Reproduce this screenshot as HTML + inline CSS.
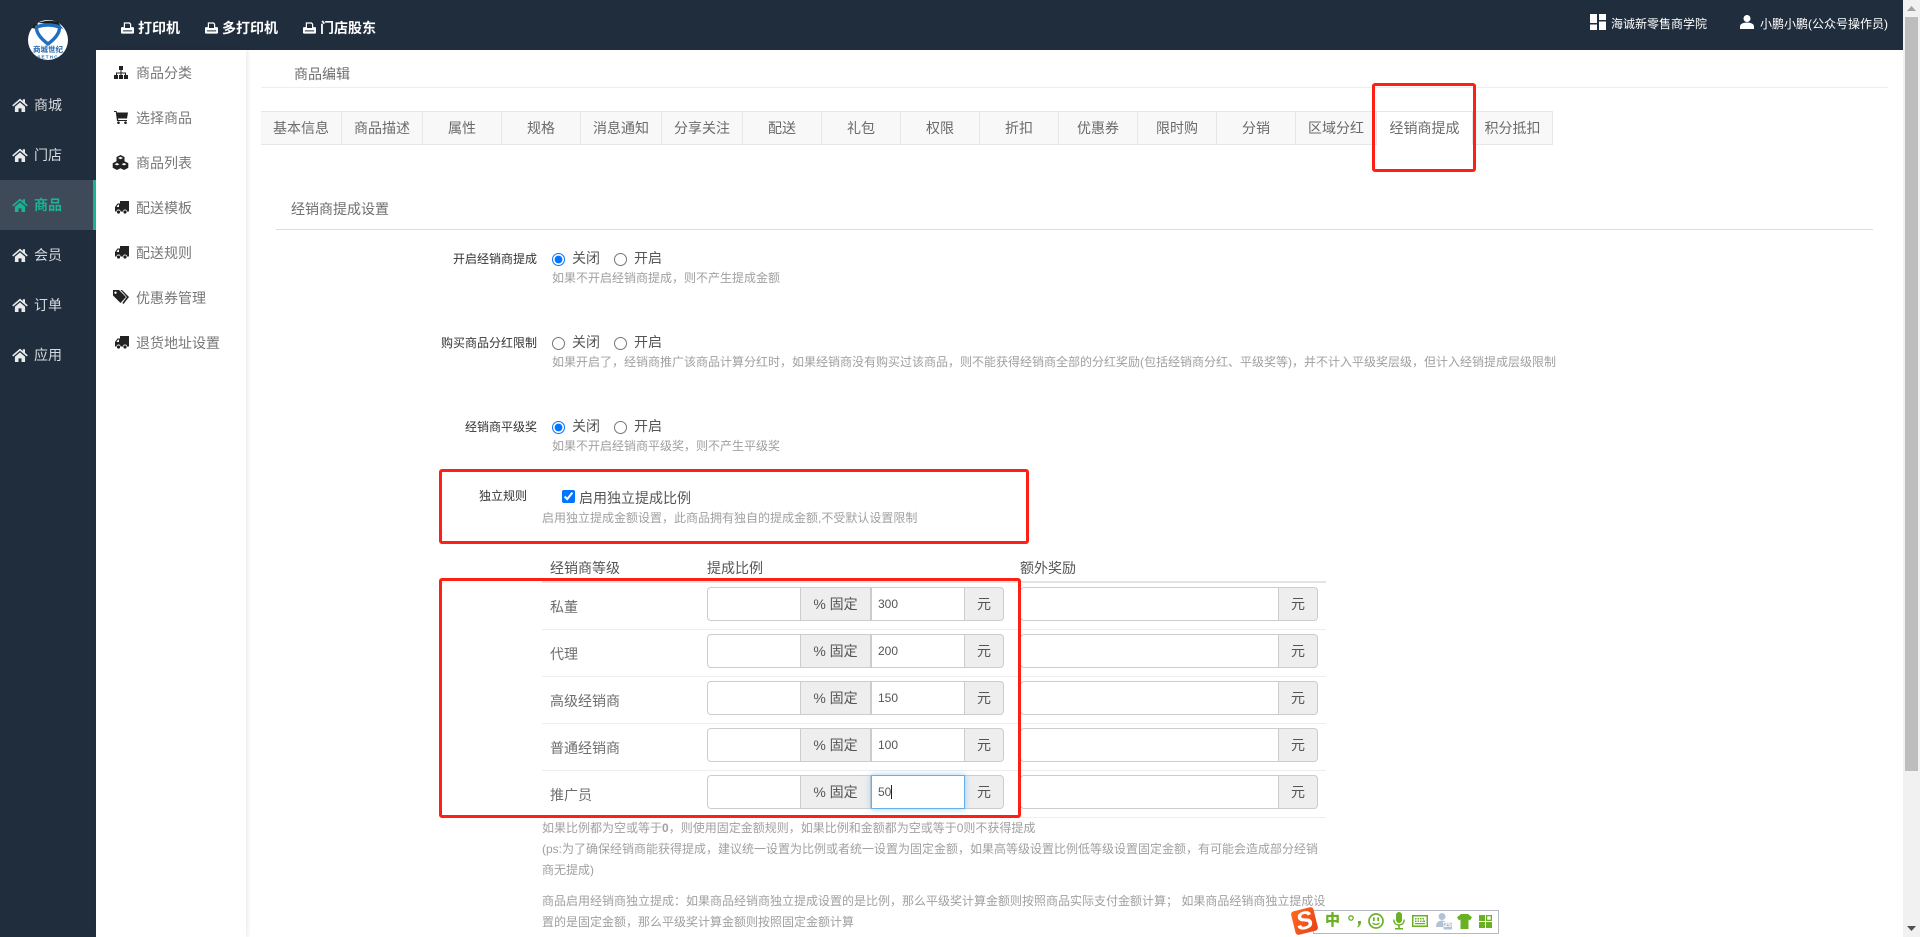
<!DOCTYPE html>
<html lang="zh-CN">
<head>
<meta charset="utf-8">
<title>商品编辑</title>
<style>
html,body{margin:0;padding:0;width:1920px;height:937px;overflow:hidden;background:#fff;}
body{position:relative;font-family:"Liberation Sans","Noto Sans CJK SC",sans-serif;font-size:14px;color:#666;}
.a{position:absolute;white-space:nowrap;}
.t{position:absolute;white-space:nowrap;line-height:20px;height:20px;}
svg{position:absolute;display:block;}
.nav{color:#d6dade;left:34px;font-size:14px;}
.sub{left:136px;color:#777;}
.tab{position:absolute;top:111px;height:32px;line-height:33px;text-align:center;background:#f8f8f8;border:1px solid #e7e7e7;border-left:0;box-sizing:content-box;color:#6a6a6a;}
.lab{position:absolute;right:1383px;font-size:12px;color:#333;line-height:20px;white-space:nowrap;}
.help{position:absolute;left:552px;font-size:12px;color:#a0a0a0;line-height:20px;white-space:nowrap;}
.help2{position:absolute;left:542px;font-size:12px;color:#a0a0a0;line-height:20px;white-space:nowrap;}
input[type=radio],input[type=checkbox]{position:absolute;margin:0;width:13px;height:13px;}
.rb{position:absolute;border:3px solid #ff2015;border-radius:3px;box-sizing:border-box;}
.inp{position:absolute;box-sizing:border-box;height:34px;border:1px solid #ccc;background:#fff;font-size:12px;color:#555;line-height:32px;padding-left:6px;}
.add{position:absolute;box-sizing:border-box;height:34px;border:1px solid #ccc;border-left:0;background:#eee;color:#555;text-align:center;line-height:33px;font-size:14px;}
.ln{position:absolute;left:542px;width:784px;height:1px;background:#eee;}
.lvl{position:absolute;left:550px;color:#6e6e6e;line-height:20px;}
.sg{position:absolute;fill:#6ab023;}
</style>
</head>
<body>
<!-- left sidebar -->
<div class="a" style="left:0;top:0;width:96px;height:937px;background:#202d3d;"></div>
<div class="a" style="left:96px;top:0;width:1807px;height:50px;background:#202d3d;"></div>
<div class="a" style="left:0;top:180px;width:93px;height:50px;background:#3e4a58;"></div>
<div class="a" style="left:93px;top:180px;width:3px;height:50px;background:#1ab394;"></div>

<!-- logo -->
<svg style="left:28px;top:20px;" width="40" height="40" viewBox="0 0 40 40">
<circle cx="20" cy="20" r="20" fill="#fff"/>
<path d="M10 3 Q20 -1 30 2 L37 12 Q35 8 29 6 Q20 3 10 3z" fill="#1c1c1c"/>
<path d="M4 8 Q6 4 10 3 L8 9z" fill="#1c1c1c"/>
<path d="M8.500 7 Q20 3 31.500 7 Q32 15 20 24 Q8 15 8.500 7z" fill="none" stroke="#1e6fc0" stroke-width="3.400" stroke-linejoin="round"/>
<text x="20" y="32" text-anchor="middle" font-size="7.500" font-weight="bold" fill="#2466ad" font-family="'Noto Sans CJK SC',sans-serif">商城世纪</text>
<text x="20" y="38.500" text-anchor="middle" font-size="4.500" font-weight="bold" fill="#2466ad" letter-spacing="1.200" font-family="'Liberation Sans',sans-serif">SETHC</text>
</svg>

<!-- main nav -->
<svg style="left:12px;top:98px;" width="16" height="14" viewBox="0 0 16 14"><path fill="#e8eaec" d="M8 .6.2 7.3l1 1.2L8 2.8l6.8 5.7 1-1.2L13 4.9V1.2h-2.200v1.800zM2.900 8.800V14h3.600v-3.600h3V14h3.600V8.800L8 4.400z"/></svg>
<div class="t nav" style="top:95px;">商城</div>
<svg style="left:12px;top:148px;" width="16" height="14" viewBox="0 0 16 14"><path fill="#e8eaec" d="M8 .6.2 7.3l1 1.2L8 2.8l6.8 5.7 1-1.2L13 4.9V1.2h-2.200v1.800zM2.900 8.800V14h3.600v-3.600h3V14h3.600V8.800L8 4.400z"/></svg>
<div class="t nav" style="top:145px;">门店</div>
<svg style="left:12px;top:198px;" width="16" height="14" viewBox="0 0 16 14"><path fill="#1ab394" d="M8 .6.2 7.3l1 1.2L8 2.8l6.8 5.7 1-1.2L13 4.9V1.2h-2.200v1.800zM2.900 8.800V14h3.600v-3.600h3V14h3.600V8.800L8 4.400z"/></svg>
<div class="t nav" style="top:195px;color:#1ab394;font-weight:700;">商品</div>
<svg style="left:12px;top:248px;" width="16" height="14" viewBox="0 0 16 14"><path fill="#e8eaec" d="M8 .6.2 7.3l1 1.2L8 2.8l6.8 5.7 1-1.2L13 4.9V1.2h-2.200v1.800zM2.900 8.800V14h3.600v-3.600h3V14h3.600V8.800L8 4.400z"/></svg>
<div class="t nav" style="top:245px;">会员</div>
<svg style="left:12px;top:298px;" width="16" height="14" viewBox="0 0 16 14"><path fill="#e8eaec" d="M8 .6.2 7.3l1 1.2L8 2.8l6.8 5.7 1-1.2L13 4.9V1.2h-2.200v1.800zM2.900 8.800V14h3.600v-3.600h3V14h3.600V8.800L8 4.400z"/></svg>
<div class="t nav" style="top:295px;">订单</div>
<svg style="left:12px;top:348px;" width="16" height="14" viewBox="0 0 16 14"><path fill="#e8eaec" d="M8 .6.2 7.3l1 1.2L8 2.8l6.8 5.7 1-1.2L13 4.9V1.2h-2.200v1.800zM2.900 8.800V14h3.600v-3.600h3V14h3.600V8.800L8 4.400z"/></svg>
<div class="t nav" style="top:345px;">应用</div>

<!-- top bar -->
<svg style="left:121px;top:22px;" width="13" height="12" viewBox="0 0 14 12"><path fill="#fff" fill-rule="evenodd" d="M3 0h6.500L11 1.500V5h2c.6 0 1 .4 1 1v5c0 .6-.4 1-1 1H1c-.6 0-1-.4-1-1V6c0-.6.4-1 1-1h2zm1.300 1.300V6h5.400V2.200L8.800 1.300zM2 8.600v1.100h10V8.600z"/></svg>
<div class="t" style="left:138px;top:18px;color:#fff;font-weight:700;">打印机</div>
<svg style="left:205px;top:22px;" width="13" height="12" viewBox="0 0 14 12"><path fill="#fff" fill-rule="evenodd" d="M3 0h6.500L11 1.500V5h2c.6 0 1 .4 1 1v5c0 .6-.4 1-1 1H1c-.6 0-1-.4-1-1V6c0-.6.4-1 1-1h2zm1.300 1.300V6h5.400V2.200L8.800 1.300zM2 8.600v1.100h10V8.600z"/></svg>
<div class="t" style="left:222px;top:18px;color:#fff;font-weight:700;">多打印机</div>
<svg style="left:303px;top:22px;" width="13" height="12" viewBox="0 0 14 12"><path fill="#fff" fill-rule="evenodd" d="M3 0h6.500L11 1.500V5h2c.6 0 1 .4 1 1v5c0 .6-.4 1-1 1H1c-.6 0-1-.4-1-1V6c0-.6.4-1 1-1h2zm1.300 1.300V6h5.400V2.200L8.800 1.300zM2 8.600v1.100h10V8.600z"/></svg>
<div class="t" style="left:320px;top:18px;color:#fff;font-weight:700;">门店股东</div>

<svg style="left:1590px;top:14px;" width="16" height="16" viewBox="0 0 16 16"><path fill="#fff" d="M0 0h7v9H0zM9 0h7v6H9zM0 10.500h7V16H0zM9 7.500h7V16H9z"/></svg>
<div class="t" style="left:1611px;top:14px;font-size:12px;color:#fff;">海诚新零售商学院</div>
<svg style="left:1740px;top:15px;" width="14" height="14" viewBox="0 0 14 14"><circle cx="7" cy="3.500" r="3.500" fill="#fff"/><path fill="#fff" d="M0 14v-2.500C0 9 3 7.500 7 7.500s7 1.500 7 4V14z"/></svg>
<div class="t" style="left:1760px;top:14px;font-size:12px;color:#fff;">小鹏小鹏(公众号操作员)</div>

<!-- sub sidebar -->
<div class="a" style="left:96px;top:50px;width:150px;height:887px;background:#fff;box-shadow:2px 0 4px rgba(0,0,0,.08);"></div>
<svg style="left:114px;top:66px;" width="14" height="13" viewBox="0 0 14 13"><path fill="#222" d="M5 0h4v4H7.500v2.500H12V9h2v4h-4V9h1V7.500H7.500V9H9v4H5V9h1.500V7.500H3V9h1v4H0V9h2V6.500h4.500V4H5z"/></svg>
<div class="t sub" style="top:63px;">商品分类</div>
<svg style="left:114px;top:111px;" width="14" height="13" viewBox="0 0 14 13"><path fill="#222" d="M0 0h2.500l.5 1.500h11L13 7.500H4l.3 1.500H13v1H3L1.800 1H0z"/><circle cx="4.500" cy="11.700" r="1.300" fill="#222"/><circle cx="11.500" cy="11.700" r="1.300" fill="#222"/></svg>
<div class="t sub" style="top:108px;">选择商品</div>
<svg style="left:112px;top:155px;" width="17" height="15" viewBox="0 0 17 15"><path fill="#222" fill-rule="evenodd" d="M8.500 0 12.500 2v4.300l3.800 1.900v4.600L12 15l-3.500-1.800L5 15 .7 12.800V8.200l3.800-1.900V2zM6 3l2.500 1.200L11 3 8.500 1.700zM2.500 9.200 5 10.400l2.400-1.200L5 8zM9.600 9.200l2.400 1.200 2.500-1.200L12 8z"/></svg>
<div class="t sub" style="top:153px;">商品列表</div>
<svg style="left:115px;top:201px;" width="14" height="13" viewBox="0 0 14 13"><path fill="#222" fill-rule="evenodd" d="M14 0v10.500h-2a2 2 0 0 0-4 0H5.500a2 2 0 0 0-4 0H0V6l2.500-3.500H5V0zM1.500 6H4V3.600H3z"/><circle cx="3.500" cy="11" r="1.600" fill="#222"/><circle cx="10" cy="11" r="1.600" fill="#222"/></svg>
<div class="t sub" style="top:198px;">配送模板</div>
<svg style="left:115px;top:246px;" width="14" height="13" viewBox="0 0 14 13"><path fill="#222" fill-rule="evenodd" d="M14 0v10.500h-2a2 2 0 0 0-4 0H5.500a2 2 0 0 0-4 0H0V6l2.500-3.500H5V0zM1.500 6H4V3.600H3z"/><circle cx="3.500" cy="11" r="1.600" fill="#222"/><circle cx="10" cy="11" r="1.600" fill="#222"/></svg>
<div class="t sub" style="top:243px;">配送规则</div>
<svg style="left:113px;top:290px;" width="16" height="14" viewBox="0 0 16 14"><path fill="#222" fill-rule="evenodd" d="M0 0h6l7 7-5.500 6L0 5.500zM2.500 1.500a1.200 1.200 0 1 0 .01 0zM7.500 0h1.500l7 7-5.500 7-1.200-1 4.500-6z"/></svg>
<div class="t sub" style="top:288px;">优惠券管理</div>
<svg style="left:115px;top:336px;" width="14" height="13" viewBox="0 0 14 13"><path fill="#222" fill-rule="evenodd" d="M14 0v10.500h-2a2 2 0 0 0-4 0H5.500a2 2 0 0 0-4 0H0V6l2.500-3.500H5V0zM1.500 6H4V3.600H3z"/><circle cx="3.500" cy="11" r="1.600" fill="#222"/><circle cx="10" cy="11" r="1.600" fill="#222"/></svg>
<div class="t sub" style="top:333px;">退货地址设置</div>

<!-- breadcrumb -->
<div class="t" style="left:294px;top:64px;color:#6e6e6e;">商品编辑</div>
<div class="a" style="left:261px;top:87px;width:1627px;height:1px;background:#eee;"></div>

<!-- tabs -->
<div class="a" style="left:261px;top:111px;width:1px;height:34px;background:#f8f8f8;"></div>
<div class="tab" style="left:261px;width:80px;">基本信息</div>
<div class="tab" style="left:342px;width:80px;">商品描述</div>
<div class="tab" style="left:423px;width:78px;">属性</div>
<div class="tab" style="left:502px;width:78px;">规格</div>
<div class="tab" style="left:581px;width:80px;">消息通知</div>
<div class="tab" style="left:662px;width:80px;">分享关注</div>
<div class="tab" style="left:743px;width:78px;">配送</div>
<div class="tab" style="left:822px;width:78px;">礼包</div>
<div class="tab" style="left:901px;width:78px;">权限</div>
<div class="tab" style="left:980px;width:78px;">折扣</div>
<div class="tab" style="left:1059px;width:78px;">优惠券</div>
<div class="tab" style="left:1138px;width:78px;">限时购</div>
<div class="tab" style="left:1217px;width:78px;">分销</div>
<div class="tab" style="left:1296px;width:80px;">区域分红</div>
<div class="tab" style="left:1377px;width:95px;background:#fff;border-bottom:1px solid #fff;">经销商提成</div>
<div class="tab" style="left:1473px;width:79px;">积分抵扣</div>

<!-- section -->
<div class="t" style="left:291px;top:199px;color:#6e6e6e;">经销商提成设置</div>
<div class="a" style="left:276px;top:229px;width:1597px;height:1px;background:#ddd;"></div>

<!-- rows -->
<div class="lab" style="top:249px;">开启经销商提成</div>
<input type="radio" name="a" checked style="left:552px;top:253px;">
<div class="t" style="left:572px;top:248px;color:#555;">关闭</div>
<input type="radio" name="a" style="left:614px;top:253px;">
<div class="t" style="left:634px;top:248px;color:#555;">开启</div>
<div class="help" style="top:268px;">如果不开启经销商提成，则不产生提成金额</div>

<div class="lab" style="top:333px;">购买商品分红限制</div>
<input type="radio" name="b" style="left:552px;top:337px;">
<div class="t" style="left:572px;top:332px;color:#555;">关闭</div>
<input type="radio" name="b" style="left:614px;top:337px;">
<div class="t" style="left:634px;top:332px;color:#555;">开启</div>
<div class="help" style="top:352px;">如果开启了，经销商推广该商品计算分红时，如果经销商没有购买过该商品，则不能获得经销商全部的分红奖励(包括经销商分红、平级奖等)，并不计入平级奖层级，但计入经销提成层级限制</div>

<div class="lab" style="top:417px;">经销商平级奖</div>
<input type="radio" name="c" checked style="left:552px;top:421px;">
<div class="t" style="left:572px;top:416px;color:#555;">关闭</div>
<input type="radio" name="c" style="left:614px;top:421px;">
<div class="t" style="left:634px;top:416px;color:#555;">开启</div>
<div class="help" style="top:436px;">如果不开启经销商平级奖，则不产生平级奖</div>

<div class="lab" style="top:486px;right:1393px;">独立规则</div>
<input type="checkbox" checked style="left:562px;top:490px;">
<div class="t" style="left:579px;top:488px;color:#555;">启用独立提成比例</div>
<div class="help2" style="top:508px;">启用独立提成金额设置，此商品拥有独自的提成金额,不受默认设置限制</div>

<!-- table -->
<div class="t" style="left:550px;top:558px;color:#555;">经销商等级</div>
<div class="t" style="left:707px;top:558px;color:#555;">提成比例</div>
<div class="t" style="left:1020px;top:558px;color:#555;">额外奖励</div>
<div class="ln" style="top:581px;height:2px;background:#e4e4e4;"></div>
<div class="ln" style="top:629px;"></div>
<div class="ln" style="top:676px;"></div>
<div class="ln" style="top:723px;"></div>
<div class="ln" style="top:770px;"></div>
<div class="ln" style="top:817px;"></div>

<div class="lvl" style="top:597px;">私董</div>
<div class="inp" style="left:707px;top:587px;width:94px;border-radius:4px 0 0 4px;"></div>
<div class="add" style="left:801px;top:587px;width:70px;">% 固定</div>
<div class="inp" style="left:871px;top:587px;width:94px;">300</div>
<div class="add" style="left:965px;top:587px;width:39px;border-radius:0 4px 4px 0;">元</div>
<div class="inp" style="left:1020px;top:587px;width:259px;border-radius:4px 0 0 4px;"></div>
<div class="add" style="left:1279px;top:587px;width:39px;border-radius:0 4px 4px 0;">元</div>

<div class="lvl" style="top:644px;">代理</div>
<div class="inp" style="left:707px;top:634px;width:94px;border-radius:4px 0 0 4px;"></div>
<div class="add" style="left:801px;top:634px;width:70px;">% 固定</div>
<div class="inp" style="left:871px;top:634px;width:94px;">200</div>
<div class="add" style="left:965px;top:634px;width:39px;border-radius:0 4px 4px 0;">元</div>
<div class="inp" style="left:1020px;top:634px;width:259px;border-radius:4px 0 0 4px;"></div>
<div class="add" style="left:1279px;top:634px;width:39px;border-radius:0 4px 4px 0;">元</div>

<div class="lvl" style="top:691px;">高级经销商</div>
<div class="inp" style="left:707px;top:681px;width:94px;border-radius:4px 0 0 4px;"></div>
<div class="add" style="left:801px;top:681px;width:70px;">% 固定</div>
<div class="inp" style="left:871px;top:681px;width:94px;">150</div>
<div class="add" style="left:965px;top:681px;width:39px;border-radius:0 4px 4px 0;">元</div>
<div class="inp" style="left:1020px;top:681px;width:259px;border-radius:4px 0 0 4px;"></div>
<div class="add" style="left:1279px;top:681px;width:39px;border-radius:0 4px 4px 0;">元</div>

<div class="lvl" style="top:738px;">普通经销商</div>
<div class="inp" style="left:707px;top:728px;width:94px;border-radius:4px 0 0 4px;"></div>
<div class="add" style="left:801px;top:728px;width:70px;">% 固定</div>
<div class="inp" style="left:871px;top:728px;width:94px;">100</div>
<div class="add" style="left:965px;top:728px;width:39px;border-radius:0 4px 4px 0;">元</div>
<div class="inp" style="left:1020px;top:728px;width:259px;border-radius:4px 0 0 4px;"></div>
<div class="add" style="left:1279px;top:728px;width:39px;border-radius:0 4px 4px 0;">元</div>

<div class="lvl" style="top:785px;">推广员</div>
<div class="inp" style="left:707px;top:775px;width:94px;border-radius:4px 0 0 4px;"></div>
<div class="add" style="left:801px;top:775px;width:70px;">% 固定</div>
<div class="add" style="left:965px;top:775px;width:39px;border-radius:0 4px 4px 0;">元</div>
<div class="inp" style="left:871px;top:775px;width:94px;border-color:#66afe9;box-shadow:0 0 6px rgba(102,175,233,.6);">50<span style="display:inline-block;width:1px;height:14px;background:#222;vertical-align:-3px;"></span></div>
<div class="inp" style="left:1020px;top:775px;width:259px;border-radius:4px 0 0 4px;"></div>
<div class="add" style="left:1279px;top:775px;width:39px;border-radius:0 4px 4px 0;">元</div>

<!-- help -->
<div class="help2" style="top:818px;">如果比例都为空或等于<b>0</b>，则使用固定金额规则，如果比例和金额都为空或等于0则不获得提成</div>
<div class="help2" style="top:839px;">(ps:为了确保经销商能获得提成，建议统一设置为比例或者统一设置为固定金额，如果高等级设置比例低等级设置固定金额，有可能会造成部分经销</div>
<div class="help2" style="top:860px;">商无提成)</div>
<div class="help2" style="top:891px;">商品启用经销商独立提成：如果商品经销商独立提成设置的是比例，那么平级奖计算金额则按照商品实际支付金额计算； 如果商品经销商独立提成设</div>
<div class="help2" style="top:912px;">置的是固定金额，那么平级奖计算金额则按照固定金额计算</div>

<!-- red boxes -->
<div class="rb" style="left:1372px;top:83px;width:104px;height:89px;"></div>
<div class="rb" style="left:439px;top:469px;width:590px;height:75px;"></div>
<div class="rb" style="left:439px;top:578px;width:582px;height:240px;"></div>

<!-- scrollbar -->
<div class="a" style="left:1903px;top:0;width:17px;height:937px;background:#f1f1f1;"></div>
<div class="a" style="left:1905px;top:17px;width:13px;height:754px;background:#bdbdbd;"></div>
<svg style="left:1907px;top:6px;" width="9" height="5" viewBox="0 0 9 5"><path fill="#a3a3a3" d="M4.500 0 9 5H0z"/></svg>
<svg style="left:1907px;top:926px;" width="9" height="5" viewBox="0 0 9 5"><path fill="#505050" d="M0 0h9L4.500 5z"/></svg>

<!-- sogou IME bar -->
<div class="a" style="left:1313px;top:910px;width:184px;height:22px;background:#fff;border:1px solid #b4b8c0;"></div>
<div class="a" style="left:1293px;top:909px;width:23px;height:24px;background:linear-gradient(135deg,#ff6a1c,#e8401a);border-radius:3px;transform:rotate(-14deg);color:#fff;font:italic 700 25px/24px 'Liberation Sans',sans-serif;text-align:center;">S</div>
<div class="t" style="left:1325px;top:911px;color:#6ab023;font-weight:900;font-size:15px;">中</div>
<svg class="sg" style="left:1348px;top:913px;" width="14" height="17" viewBox="0 0 14 17"><circle cx="3" cy="5" r="2.200" fill="none" stroke="#6ab023" stroke-width="1.300"/><path fill="#6ab023" d="M10 8h3c.3 3-1 5.500-3.200 6.500l-.6-.9c1-.7 1.400-1.600 1.500-2.500H10z"/></svg>
<svg class="sg" style="left:1368px;top:913px;" width="16" height="16" viewBox="0 0 16 16"><circle cx="8" cy="8" r="7" fill="none" stroke="#6ab023" stroke-width="1.700"/><rect x="5" y="4.500" width="1.700" height="3.500" fill="#6ab023"/><rect x="9.300" y="4.500" width="1.700" height="3.500" fill="#6ab023"/><path d="M4.500 10q3.500 3 7 0" fill="none" stroke="#6ab023" stroke-width="1.300"/></svg>
<svg class="sg" style="left:1393px;top:912px;" width="12" height="18" viewBox="0 0 12 18"><rect x="3" y="0" width="6" height="11" rx="3" fill="#6ab023"/><path d="M.8 7.500c0 3.500 2.200 5.500 5.200 5.500s5.200-2 5.200-5.500" fill="none" stroke="#6ab023" stroke-width="1.400"/><path fill="#6ab023" d="M5.200 13h1.600v3H10v1.500H2V16h3.200z"/></svg>
<svg class="sg" style="left:1412px;top:915px;" width="16" height="12" viewBox="0 0 16 12"><path fill="#6ab023" fill-rule="evenodd" d="M0 0h16v12H0zM1.500 1.500v9h13v-9zM3 3h1.500v1.500H3zM5.500 3H7v1.500H5.500zM8 3h1.500v1.500H8zM10.500 3H12v1.500h-1.500zM3 5.500h1.500V7H3zM5.500 5.500H7V7H5.500zM8 5.500h1.500V7H8zM10.500 5.500H13V7h-2.500zM3 8h10v1.200H3z"/></svg>
<svg style="left:1436px;top:913px;" width="16" height="17" viewBox="0 0 16 17"><circle cx="6" cy="3.500" r="3.500" fill="#b4c2d6"/><path fill="#b4c2d6" d="M0 14c0-4 2-6.500 6-6.500 1.500 0 2.800.4 3.800 1.200H7v5.300z"/><rect x="7.500" y="9.500" width="8.500" height="7" rx="1" fill="#b4c2d6"/></svg>
<div class="a" style="left:1444px;top:922px;font:700 7px/7px 'Liberation Sans',sans-serif;color:#fff;">25</div>
<svg class="sg" style="left:1457px;top:914px;" width="15" height="15" viewBox="0 0 15 15"><path fill="#6ab023" d="M4 0h7l4 3.200-2 3.300-1.500-1V15h-8V5.500L2 6.500 0 3.200z"/></svg>
<svg class="sg" style="left:1479px;top:915px;" width="13" height="13" viewBox="0 0 13 13"><path fill="#6ab023" fill-rule="evenodd" d="M0 0h6v6H0zM7 0h6v6H7zM8.300 1.300v3.400h3.400V1.300zM0 7h6v6H0zM7 7h6v6H7z"/></svg>
</body>
</html>
